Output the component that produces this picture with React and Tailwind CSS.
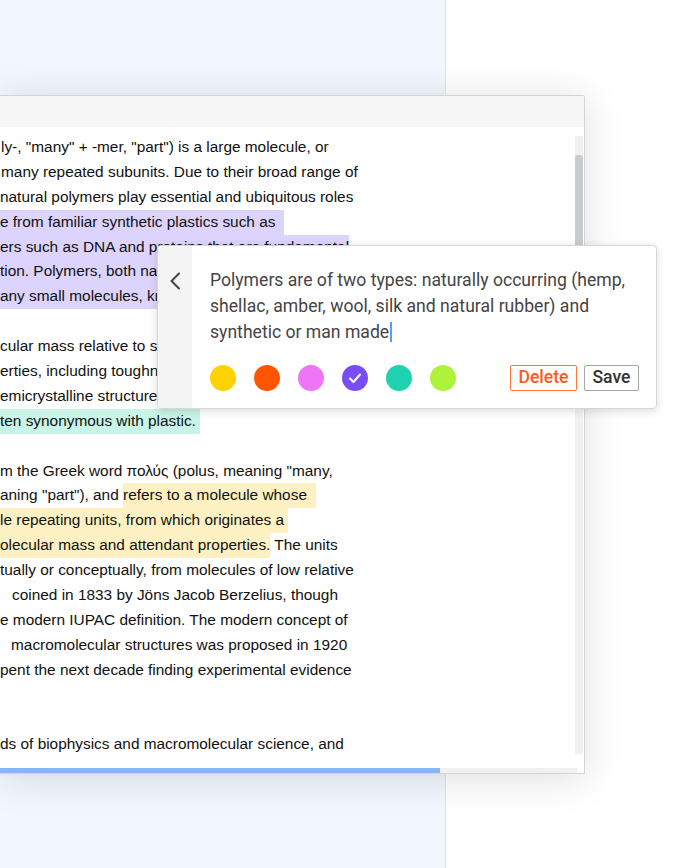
import React from 'react'

// text lines of the document, each split into [text, highlight] pieces
const lines = [
  { s: [['ly-, "many" + -mer, "part") is a large molecule, or']], pl: 'pl-[1px]' },
  { s: [['many repeated subunits. Due to their broad range of']], pl: 'pl-[1px]' },
  { s: [['natural polymers play essential and ubiquitous roles']] },
  { s: [['e from familiar synthetic plastics such as  ', 'p']] },
  { s: [['ers such as DNA and proteins that are fundamental', 'p']] },
  { s: [['tion. Polymers, both natural and synthetic, are created', 'p']] },
  { s: [['any small molecules, known as monomers.', 'p']] },
  { s: [] },
  { s: [['cular mass relative to small molecule compounds']] },
  { s: [['erties, including toughness, viscoelasticity, and a']] },
  { s: [['emicrystalline structures rather than crystals.']] },
  { s: [['ten synonymous with plastic. ', 't']] },
  { s: [] },
  { s: [['m the Greek word πολύς (polus, meaning "many,']] },
  { s: [['aning "part"), and '], ['refers to a molecule whose  ', 'y']] },
  { s: [['le repeating units, from which originates a ', 'y']] },
  { s: [['olecular mass and attendant properties.', 'y'], [' The units']] },
  { s: [['tually or conceptually, from molecules of low relative']] },
  { s: [['coined in 1833 by Jöns Jacob Berzelius, though']], pl: 'pl-[12px]' },
  { s: [['e modern IUPAC definition. The modern concept of']] },
  { s: [['macromolecular structures was proposed in 1920']], pl: 'pl-[11px]' },
  { s: [['pent the next decade finding experimental evidence']] },
  { s: [] },
  { s: [] },
  { s: [['ds of biophysics and macromolecular science, and']] },
]

const hlColor = {
  p: 'bg-[#dcd4fc]',
  t: 'bg-[#c8f5e8]',
  y: 'bg-[#fdf1c3]',
}

const swatches = [
  { color: 'bg-[#ffd200]' },
  { color: 'bg-[#ff5500]' },
  { color: 'bg-[#ee76f6]' },
  { color: 'bg-[#7a4cf6]', checked: true },
  { color: 'bg-[#1fd3b0]' },
  { color: 'bg-[#aef23b]' },
]

const DocLine = ({ line }) => (
  <div className={`h-[24.9px] leading-[24.9px] whitespace-pre ${line.pl || ''}`}>
    {line.s.map(([text, hl], i) => (
      <span key={i} className={`inline-block h-[24.9px] ${hl ? hlColor[hl] : ''}`}>
        {text}
      </span>
    ))}
  </div>
)

const NotePopup = () => (
  <div className="absolute left-[157px] top-[245px] w-[500px] h-[164px] flex bg-white border border-[#d6d6d6] rounded-[4px] shadow-[0_2px_10px_rgba(0,0,0,0.14)]">
    <div className="w-[34px] shrink-0 bg-[#f4f4f4] rounded-l-[4px] flex justify-center pt-[26px]">
      <svg width="12" height="18" viewBox="0 0 12 18" fill="none">
        <polyline points="10,1.5 2.5,9 10,16.5" stroke="#444" strokeWidth="2" strokeLinecap="round" strokeLinejoin="round" />
      </svg>
    </div>
    <div className="flex-1 pl-[18px] pr-[17px] pt-[21px] flex flex-col" style={{ fontFamily: 'Roboto, "Noto Sans", sans-serif' }}>
      <div className="text-[17.6px] leading-[26px] text-[#444] whitespace-nowrap">
        Polymers are of two types: naturally occurring (hemp,<br />
        shellac, amber, wool, silk and natural rubber) and<br />
        synthetic or man made
        <span className="inline-block w-[1.5px] h-[20px] bg-[#5a9bf6] align-[-4px] ml-[1px]" />
      </div>
      <div className="mt-[20px] flex items-center">
        <div className="flex gap-[18px]">
          {swatches.map((sw, i) => (
            <div key={i} className={`w-[26px] h-[26px] rounded-full flex items-center justify-center ${sw.color}`}>
              {sw.checked && (
                <svg width="16" height="16" viewBox="0 0 16 16" fill="none">
                  <polyline points="3,8.5 6.5,12 13,4.5" stroke="white" strokeWidth="2" strokeLinecap="round" strokeLinejoin="round" />
                </svg>
              )}
            </div>
          ))}
        </div>
        <div className="ml-auto flex gap-[7px]">
          <button className="w-[67px] h-[26px] border border-[#ff7538] rounded-[2px] text-[17.6px] font-medium text-[#ff5a1c] leading-none">
            Delete
          </button>
          <button className="w-[55px] h-[26px] border border-[#a6a6a6] rounded-[2px] text-[17.6px] font-medium text-[#333] leading-none">
            Save
          </button>
        </div>
      </div>
    </div>
  </div>
)

const App = () => {
  return (
    <div className="relative w-[675px] h-[868px] overflow-hidden bg-white">
      <div className="flex h-full">
        <div className="w-[446px] h-full bg-[#f2f6fd] border-r border-[#e3e7ed]" />
      </div>

      <div className="absolute left-0 top-[95px] w-[585px] h-[679px] flex flex-col bg-white border-t border-r border-b border-[#d4d4d4] rounded-tr-[3px] shadow-[0_4px_40px_rgba(0,0,0,0.13)]">
        <div className="h-[31px] shrink-0 bg-[#f7f7f7]" />
        <div className="flex-1 flex min-h-0">
          <div
            className="flex-1 pt-[8px] overflow-hidden text-[15.4px] text-[#111]"
            style={{ fontFamily: '"Liberation Sans", Arial, sans-serif' }}
          >
            {lines.map((line, i) => (
              <DocLine key={i} line={line} />
            ))}
          </div>
          <div className="w-[8px] mr-[1px] pt-[9px] pb-[14px] flex flex-col">
            <div className="flex-1 bg-[#f1f1f1] pt-[19px]">
              <div className="h-[175px] bg-[#c8cccc] rounded-t-[3px]" />
            </div>
          </div>
        </div>
        <div className="h-[5px] shrink-0 flex">
          <div className="w-[440px] bg-[#8ab4f8]" />
          <div className="w-[137px] bg-[#f1f1f1]" />
        </div>
      </div>

      <NotePopup />
    </div>
  )
}

export default App
